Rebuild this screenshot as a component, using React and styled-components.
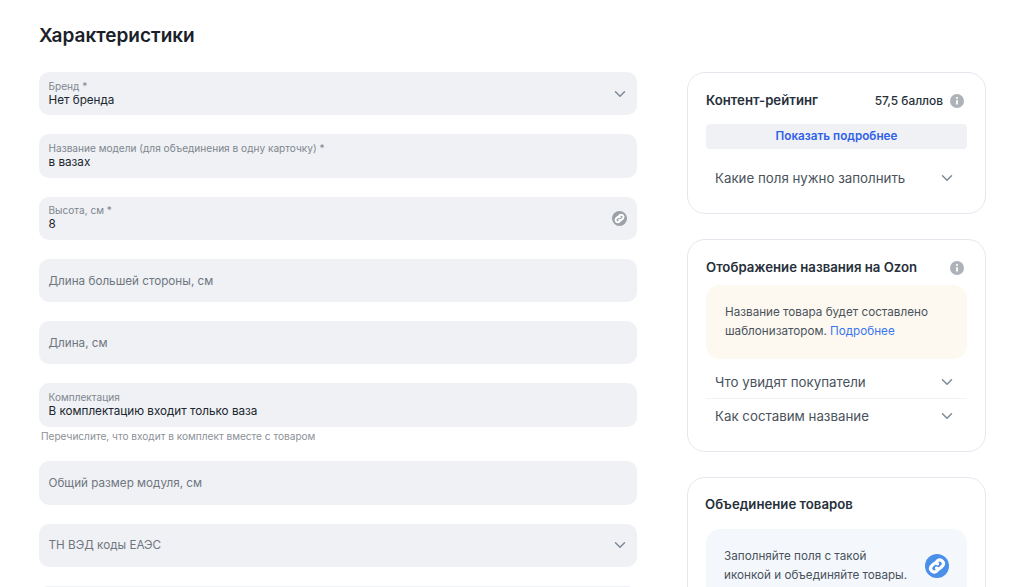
import React from 'react';
import styled, { createGlobalStyle } from 'styled-components';

const GlobalStyle = createGlobalStyle`
    html, body {
        margin: 0;
        height: 587px;
        overflow: hidden;
        background: #fff;
        font-family: Inter, "Liberation Sans", sans-serif;
        color: #1c2530;
    }
`;

const Chevron = ({ color = '#7f8893' }) => (
    <svg width="12" height="12" viewBox="0 0 12 12" fill="none">
        <path d="M1.5 3.8 6 8.2l4.5-4.4" stroke={color} strokeWidth="1.5" strokeLinecap="round" strokeLinejoin="round" />
    </svg>
);

const LinkIcon = ({ bg, size = 15 }) => (
    <svg width={size} height={size} viewBox="0 0 24 24">
        <circle cx="12" cy="12" r="12" fill={bg} />
        <g fill="none" stroke="#fff" strokeWidth="3.2" strokeLinecap="round">
            <path d="M11 8.4 12.8 6.6a3.6 3.6 0 0 1 5 5l-2 2a3.6 3.6 0 0 1-4.4.6" />
            <path d="M13 15.6 11.2 17.4a3.6 3.6 0 0 1-5-5l2-2a3.6 3.6 0 0 1 4.4-.6" />
        </g>
    </svg>
);

const InfoIcon = () => (
    <InfoWrap>
        <svg width="14" height="14" viewBox="0 0 14 14">
            <circle cx="7" cy="7" r="7" fill="#aeb3ba" />
            <rect x="6.1" y="6" width="1.8" height="4.6" rx="0.4" fill="#fff" />
            <circle cx="7" cy="4" r="1.1" fill="#fff" />
        </svg>
    </InfoWrap>
);

const fields = [
    { label: 'Бренд *', value: 'Нет бренда', icon: 'chevron' },
    { label: 'Название модели (для объединения в одну карточку) *', value: 'в вазах' },
    { label: 'Высота, см *', value: '8', icon: 'link' },
    { placeholder: 'Длина большей стороны, см' },
    { placeholder: 'Длина, см' },
    { label: 'Комплектация', value: 'В комплектацию входит только ваза', hint: 'Перечислите, что входит в комплект вместе с товаром' },
    { placeholder: 'Общий размер модуля, см' },
    { placeholder: 'ТН ВЭД коды ЕАЭС', icon: 'chevron' },
    { placeholder: '' },
];

export default function App() {
    let renderField = (field, index) => (
        <FieldWrap key={index}>
            <Field>
                {field.placeholder !== undefined ? (
                    <Placeholder>{field.placeholder}</Placeholder>
                ) : (
                    <FieldText>
                        <FieldLabel>{field.label}</FieldLabel>
                        <FieldValue>{field.value}</FieldValue>
                    </FieldText>
                )}
                {field.icon && (
                    <IconSlot>
                        {field.icon === 'chevron' ? <Chevron /> : <LinkIcon bg="#9aa1a9" />}
                    </IconSlot>
                )}
            </Field>
            {field.hint && <Hint>{field.hint}</Hint>}
        </FieldWrap>
    );

    return (
        <>
            <GlobalStyle />
            <Page>
                <Main>
                    <Heading>Характеристики</Heading>
                    <Fields>{fields.map(renderField)}</Fields>
                </Main>
                <Side>
                    <Card>
                        <CardHeader $gap={14}>
                            <CardTitle>Контент-рейтинг</CardTitle>
                            <Score>57,5 баллов</Score>
                            <InfoIcon />
                        </CardHeader>
                        <MoreButton>Показать подробнее</MoreButton>
                        <AccordionRow $top={12}>
                            <span>Какие поля нужно заполнить</span>
                            <Chevron />
                        </AccordionRow>
                    </Card>
                    <Card>
                        <CardHeader $gap={8}>
                            <CardTitle>Отображение названия на Ozon</CardTitle>
                            <InfoIcon />
                        </CardHeader>
                        <Notice>
                            Название товара будет составлено шаблонизатором. <NoticeLink>Подробнее</NoticeLink>
                        </Notice>
                        <AccordionRow $top={6} $divider>
                            <span>Что увидят покупатели</span>
                            <Chevron />
                        </AccordionRow>
                        <AccordionRow>
                            <span>Как составим название</span>
                            <Chevron />
                        </AccordionRow>
                    </Card>
                    <Card>
                        <CardHeader $gap={14}>
                            <UnionTitle>Объединение товаров</UnionTitle>
                        </CardHeader>
                        <UnionNotice>
                            <UnionText>Заполняйте поля с такой иконкой и объединяйте товары.</UnionText>
                            <LinkIcon bg="#4a90e8" size={24} />
                        </UnionNotice>
                    </Card>
                </Side>
            </Page>
        </>
    );
}

const Page = styled.div`
    display: flex;
    align-items: flex-start;
    gap: 50px;
    padding: 24px 38px 0 39px;
    height: 587px;
    box-sizing: border-box;
    overflow: hidden;
`;

const Main = styled.div`
    width: 598px;
    flex-shrink: 0;
`;

const Heading = styled.h1`
    margin: 0 0 24px;
    height: 24px;
    font-size: 19px;
    line-height: 24px;
    font-weight: 600;
    color: #1a2129;
`;

const Fields = styled.div`
    display: flex;
    flex-direction: column;
    gap: 19px;
`;

const FieldWrap = styled.div`
    display: flex;
    flex-direction: column;
`;

const Field = styled.div`
    display: flex;
    align-items: center;
    justify-content: space-between;
    height: 43.3px;
    padding: 0 10px 0 9.5px;
    box-sizing: border-box;
    background: #eff1f5;
    border-radius: 10px;
`;

const IconSlot = styled.div`
    display: flex;
    align-items: center;
    justify-content: center;
    width: 15px;
    height: 15px;
`;

const FieldText = styled.div`
    display: flex;
    flex-direction: column;
`;

const FieldLabel = styled.span`
    font-size: 10.1px;
    line-height: 13px;
    color: #80868e;
`;

const FieldValue = styled.span`
    font-size: 11.7px;
    line-height: 15px;
    color: #20262d;
`;

const Placeholder = styled.span`
    padding-top: 1px;
    font-size: 11.7px;
    line-height: 15px;
    color: #6f767f;
`;

const Hint = styled.div`
    margin: 2px 0 -0.5px 2px;
    font-size: 10.1px;
    line-height: 14px;
    color: #8b9198;
`;

const Side = styled.div`
    width: 299px;
    flex-shrink: 0;
    margin-top: 48px;
    display: flex;
    flex-direction: column;
    gap: 25px;
`;

const Card = styled.section`
    box-sizing: border-box;
    padding: 18px;
    border: 1px solid #e4e8ee;
    border-radius: 18px;
    background: #fff;
`;

const CardHeader = styled.div`
    display: flex;
    align-items: center;
    gap: 7px;
    height: 19px;
    margin-bottom: ${(props) => props.$gap}px;
`;

const InfoWrap = styled.div`
    display: flex;
    margin-right: 3px;
`;

const CardTitle = styled.h3`
    flex: 1;
    margin: 0;
    font-size: 13.2px;
    line-height: 19px;
    font-weight: 600;
    color: #27303a;
`;

const UnionTitle = styled(CardTitle)`
    margin: -2px 0 0 -1px;
`;

const Score = styled.span`
    font-size: 11.9px;
    font-weight: 500;
    color: #27303a;
`;

const MoreButton = styled.div`
    height: 25px;
    border-radius: 4px;
    background: #eff1f5;
    font-size: 11.7px;
    line-height: 25px;
    font-weight: 600;
    text-align: center;
    color: #2f62e8;
`;

const AccordionRow = styled.div`
    display: flex;
    align-items: center;
    justify-content: space-between;
    box-sizing: border-box;
    height: 34px;
    margin-top: ${(props) => props.$top || 0}px;
    padding: 0 14px 0 9px;
    font-size: 13.3px;
    color: #4a525b;
    border-bottom: ${(props) => (props.$divider ? '1px solid #f1f3f6' : 'none')};
`;

const Notice = styled.div`
    padding: 18px 19px;
    border-radius: 14px;
    background: #fdf9f1;
    font-size: 11.7px;
    line-height: 19px;
    color: #4a525b;
`;

const NoticeLink = styled.span`
    color: #3a76ee;
`;

const UnionNotice = styled.div`
    display: flex;
    align-items: center;
    justify-content: space-between;
    padding: 18px;
    border-radius: 14px;
    background: #f4f8fd;
`;

const UnionText = styled.div`
    width: 190px;
    font-size: 11.7px;
    line-height: 19px;
    color: #4a525b;
`;
